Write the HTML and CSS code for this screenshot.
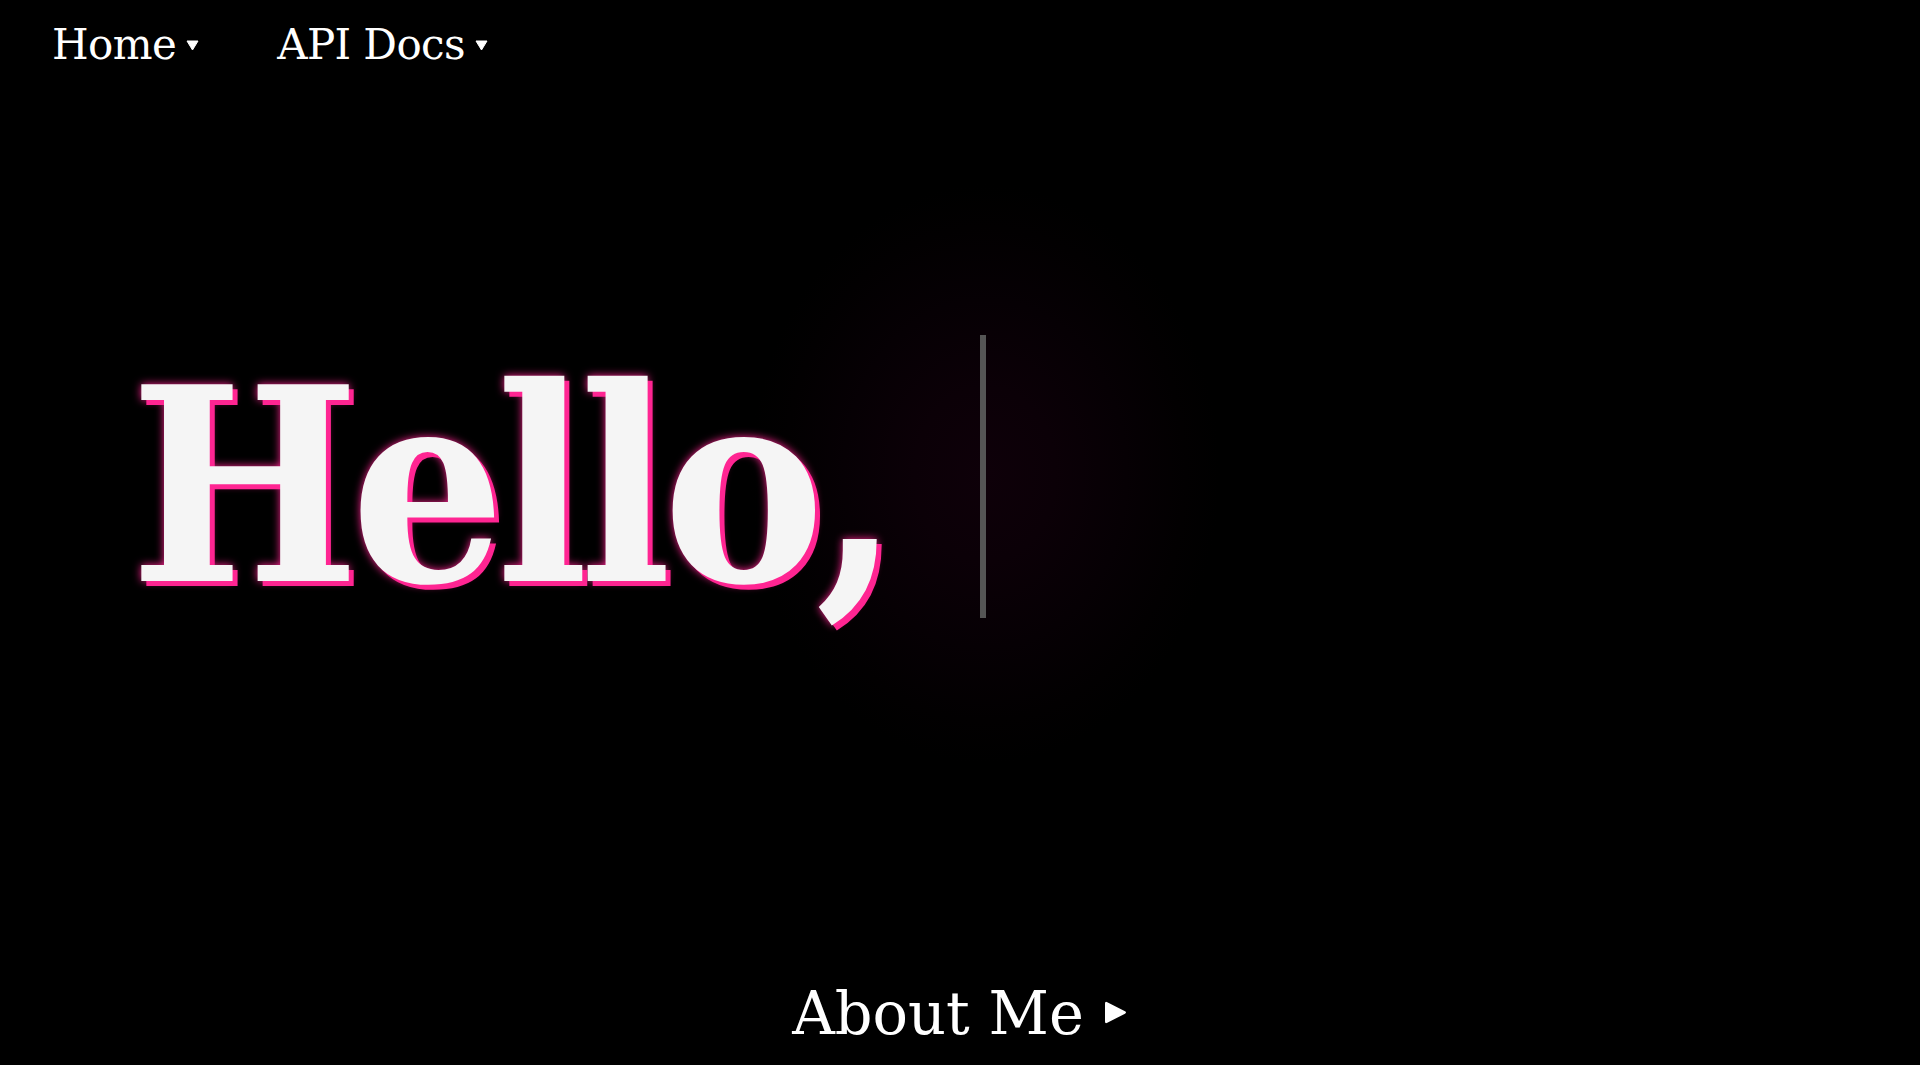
FILE: index.html
```html
<!DOCTYPE html>
<html lang="en">
<head>
<meta charset="utf-8">
<title>Hello</title>
<link rel="stylesheet" href="styles.css">
</head>
<body>
<div class="page">
  <nav class="nav">
    <a class="nav-item" href="#">Home<svg class="caret" width="13" height="11" viewBox="0 0 13 11"><path d="M1 1 L12 1 L6.5 10 Z" fill="#fff" stroke="#fff" stroke-width="1" stroke-linejoin="round"/></svg></a>
    <a class="nav-item" href="#">API Docs<svg class="caret" width="13" height="11" viewBox="0 0 13 11"><path d="M1 1 L12 1 L6.5 10 Z" fill="#fff" stroke="#fff" stroke-width="1" stroke-linejoin="round"/></svg></a>
  </nav>
  <main class="hero">
    <h1 class="greeting"><span class="typed">Hello,</span><span class="cursor"></span></h1>
  </main>
  <footer class="footer">
    <a class="about" href="#">About Me<svg class="play" width="26" height="26" viewBox="0 0 26 26"><path d="M3 3.5 Q3 1 5.3 2.2 L23 11.3 Q25 12.5 23 13.7 L5.3 22.8 Q3 24 3 21.5 Z" fill="#fff"/></svg></a>
  </footer>
</div>
</body>
</html>
```
FILE: styles.css
```css
html, body {
  margin: 0;
  padding: 0;
  background: #000;
  height: 100%;
}
.page {
  height: 100vh;
  display: flex;
  flex-direction: column;
  font-family: "DejaVu Serif", serif;
  color: #fff;
  background: radial-gradient(ellipse 235px 290px at 985px 474px, #0e0009 0%, #0b0007 30%, #060004 60%, #020001 85%, #000 100%);
}
.nav {
  display: flex;
  gap: 78px;
  padding: 1px 0 0 52px;
  height: 87px;
}
.nav-item {
  color: #fff;
  text-decoration: none;
  font-size: 42px;
  letter-spacing: -0.6px;
  line-height: 60px;
  display: flex;
  align-items: center;
}
.caret {
  margin-left: 10px;
  margin-top: 2px;
}
.hero {
  flex: 1;
  display: flex;
  align-items: center;
  padding-left: 130px;
  padding-bottom: 76px;
}
.greeting {
  margin: 0;
  font-size: 270px;
  font-weight: bold;
  font-stretch: condensed;
  letter-spacing: -9px;
  line-height: 283px;
  display: flex;
  align-items: flex-start;
}
.typed {
  color: #f5f5f5;
  text-shadow: 5px 5px 0 #ff2592, 0 0 8px #ff2592;
}
.cursor {
  width: 6px;
  height: 283px;
  background: #555;
  margin-top: -10px;
  margin-left: 89px;
}
.footer {
  display: flex;
  justify-content: center;
  height: 104px;
}
.about {
  color: #fff;
  text-decoration: none;
  font-size: 59px;
  display: flex;
  align-items: center;
  gap: 18px;
}
```
